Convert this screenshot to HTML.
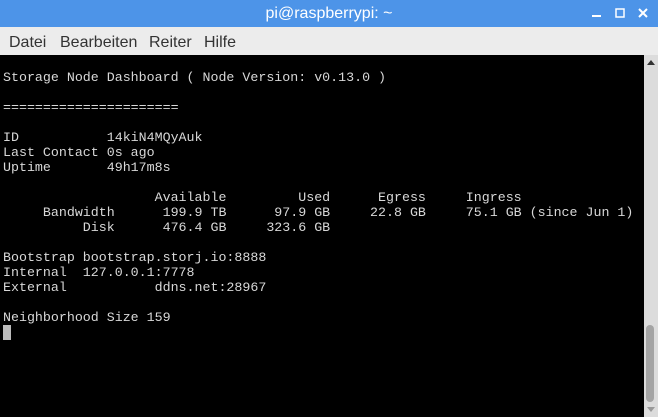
<!DOCTYPE html>
<html><head><meta charset="utf-8"><style>
*{margin:0;padding:0;box-sizing:border-box}
body{width:658px;height:417px;overflow:hidden;background:#ececec;position:relative;font-family:"Liberation Sans",sans-serif}
#title{position:absolute;left:0;top:0;width:658px;height:27px;background:#4d94e8;color:#fff;font-size:16px;line-height:27px;text-align:center}
#menu{position:absolute;left:0;top:27px;width:658px;height:28px;background:#ececec;font-size:16px;line-height:28px;color:#333}
#menu span{position:absolute;top:2px}
#term{position:absolute;left:0;top:55px;width:644px;height:362px;background:#000}
pre{position:absolute;left:3px;top:15px;font-family:"Liberation Mono",monospace;font-size:13.3px;line-height:15px;color:#d8d8d8}
#cur{position:absolute;left:3px;top:270px;width:8px;height:15px;background:#bbb}
#sb{position:absolute;left:644px;top:55px;width:14px;height:362px;background:#dcdcdc}
#thumb{position:absolute;left:646px;top:325px;width:8px;height:77px;background:#a4a4a4;border-radius:4px}
</style></head><body>
<div id="title">pi@raspberrypi: ~</div>
<svg style="position:absolute;left:590px;top:8px" width="60" height="12">
<rect x="2" y="7" width="9" height="2" fill="#fff"/>
<rect x="26" y="1" width="8" height="8" fill="none" stroke="#fff" stroke-width="1.5"/>
<path d="M49 1L57 9M57 1L49 9" stroke="#fff" stroke-width="2"/>
</svg>
<div id="menu"><span style="left:9px">Datei</span><span style="left:60px">Bearbeiten</span><span style="left:149px">Reiter</span><span style="left:204px">Hilfe</span></div>
<div id="term">
<pre>Storage Node Dashboard ( Node Version: v0.13.0 )

======================

ID           14kiN4MQyAuk
Last Contact 0s ago
Uptime       49h17m8s

                   Available         Used      Egress     Ingress
     Bandwidth      199.9 TB      97.9 GB     22.8 GB     75.1 GB (since Jun 1)
          Disk      476.4 GB     323.6 GB

Bootstrap bootstrap.storj.io:8888
Internal  127.0.0.1:7778
External           ddns.net:28967

Neighborhood Size 159</pre>
<div id="cur"></div>
</div>
<div id="sb"></div>
<svg style="position:absolute;left:645px;top:57px" width="12" height="10"><path d="M2 8L6 3L10 8Z" fill="#333"/></svg>
<div id="thumb"></div>
<svg style="position:absolute;left:645px;top:405px" width="12" height="10"><path d="M2 2L10 2L6 7Z" fill="#999"/></svg>
</body></html>
